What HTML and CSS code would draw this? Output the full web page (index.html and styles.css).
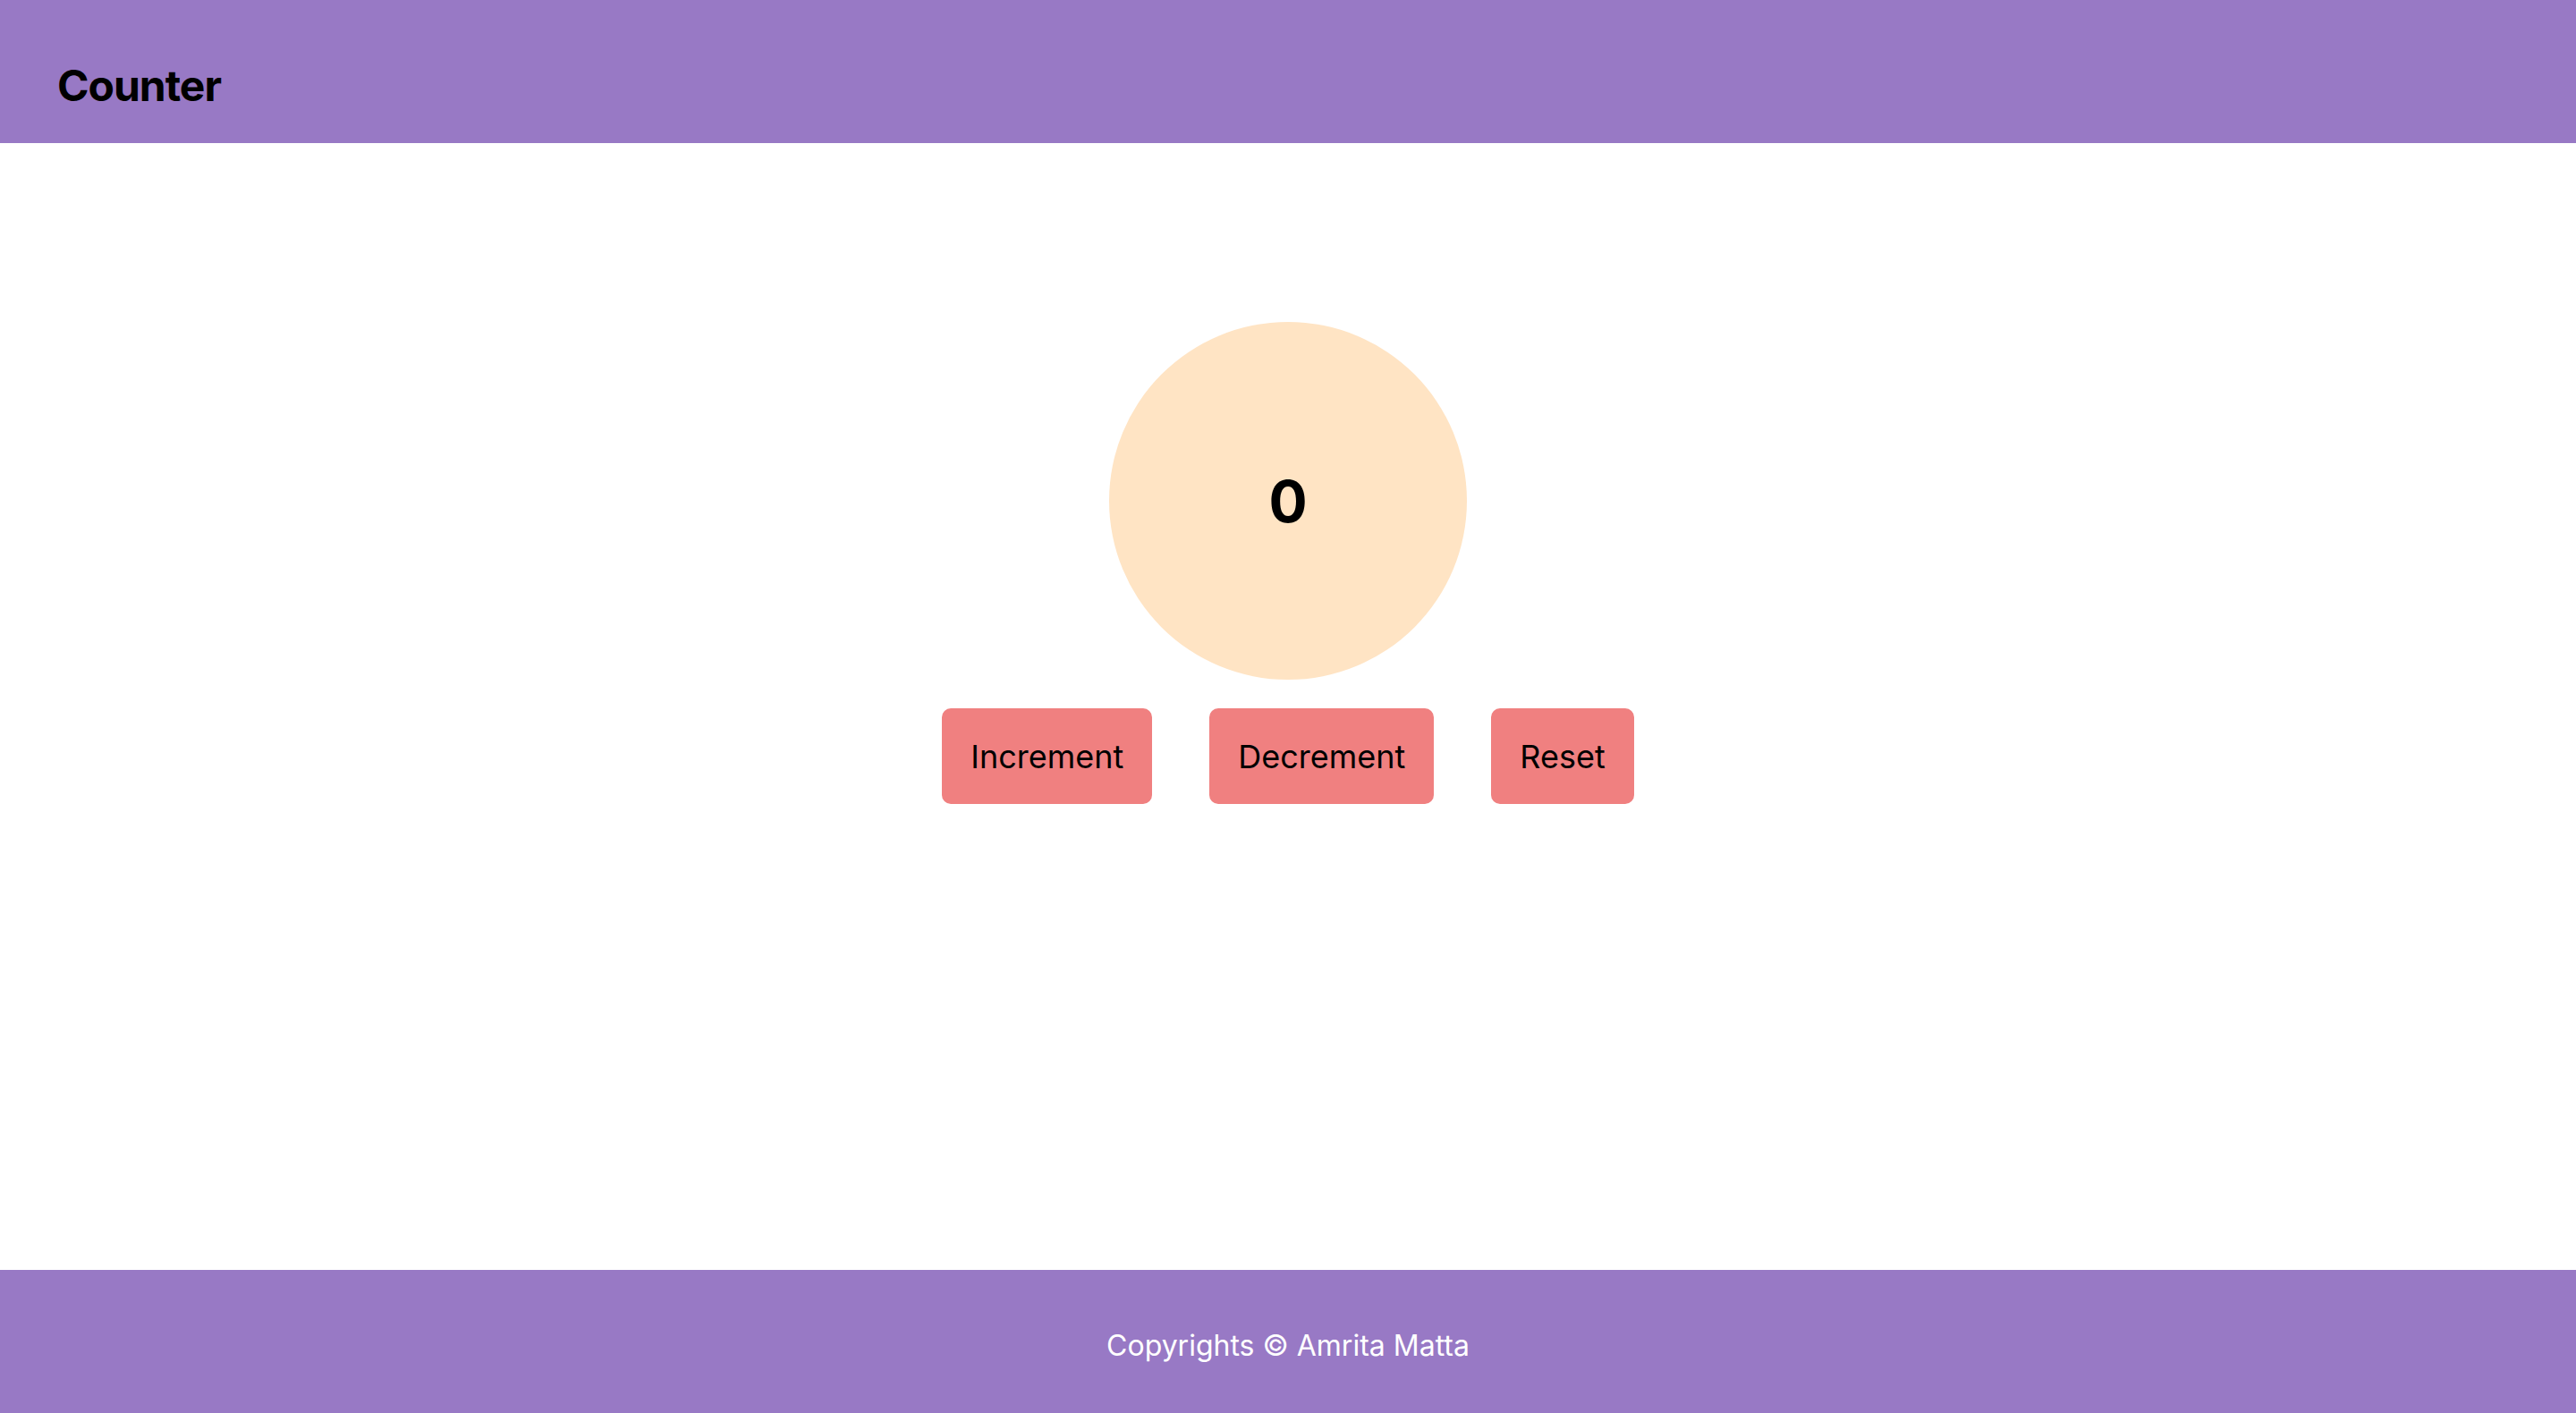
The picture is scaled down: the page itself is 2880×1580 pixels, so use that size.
FILE: index.html
```html
<!DOCTYPE html>
<html lang="en">
<head>
<meta charset="utf-8">
<title>Counter</title>
<link rel="stylesheet" href="styles.css">
</head>
<body>
<header class="topbar">
  <h1 class="title">Counter</h1>
</header>
<main class="content">
  <div class="count-circle"><span class="count-value">0</span></div>
  <div class="actions">
    <button class="btn">Increment</button>
    <button class="btn">Decrement</button>
    <button class="btn">Reset</button>
  </div>
</main>
<footer class="bottombar">
  <p class="copy">Copyrights © Amrita Matta</p>
</footer>
</body>
</html>
```

FILE: styles.css
```css
* { box-sizing: border-box; }
html, body { margin: 0; padding: 0; }
body {
  font-family: Inter, "Noto Sans", "Liberation Sans", sans-serif;
  height: 100vh;
  display: flex;
  flex-direction: column;
  background: #ffffff;
  color: #000;
}
.topbar {
  height: 160px;
  flex: 0 0 160px;
  background: #9879C5;
  display: flex;
  align-items: center;
  padding-left: 64px;
}
.title {
  margin: 30px 0 0 0;
  font-size: 48px;
  font-weight: 700;
  letter-spacing: -1px;
}
.content {
  flex: 1;
  display: flex;
  flex-direction: column;
  align-items: center;
  padding-top: 200px;
}
.count-circle {
  width: 400px;
  height: 400px;
  border-radius: 50%;
  background: #FFE4C4;
  display: flex;
  align-items: center;
  justify-content: center;
}
.count-value {
  font-size: 64px;
  font-weight: 700;
}
.actions {
  margin-top: 32px;
  display: flex;
  gap: 64px;
}
.btn {
  font-family: inherit;
  font-size: 36px;
  color: #000;
  background: #F08080;
  border: none;
  border-radius: 10px;
  padding: 0 32px;
  height: 107px;
  line-height: 1;
}
.bottombar {
  height: 160px;
  flex: 0 0 160px;
  background: #9879C5;
  display: flex;
  align-items: center;
  justify-content: center;
}
.copy {
  margin: 8px 0 0 0;
  color: #ffffff;
  font-size: 32px;
}
```
